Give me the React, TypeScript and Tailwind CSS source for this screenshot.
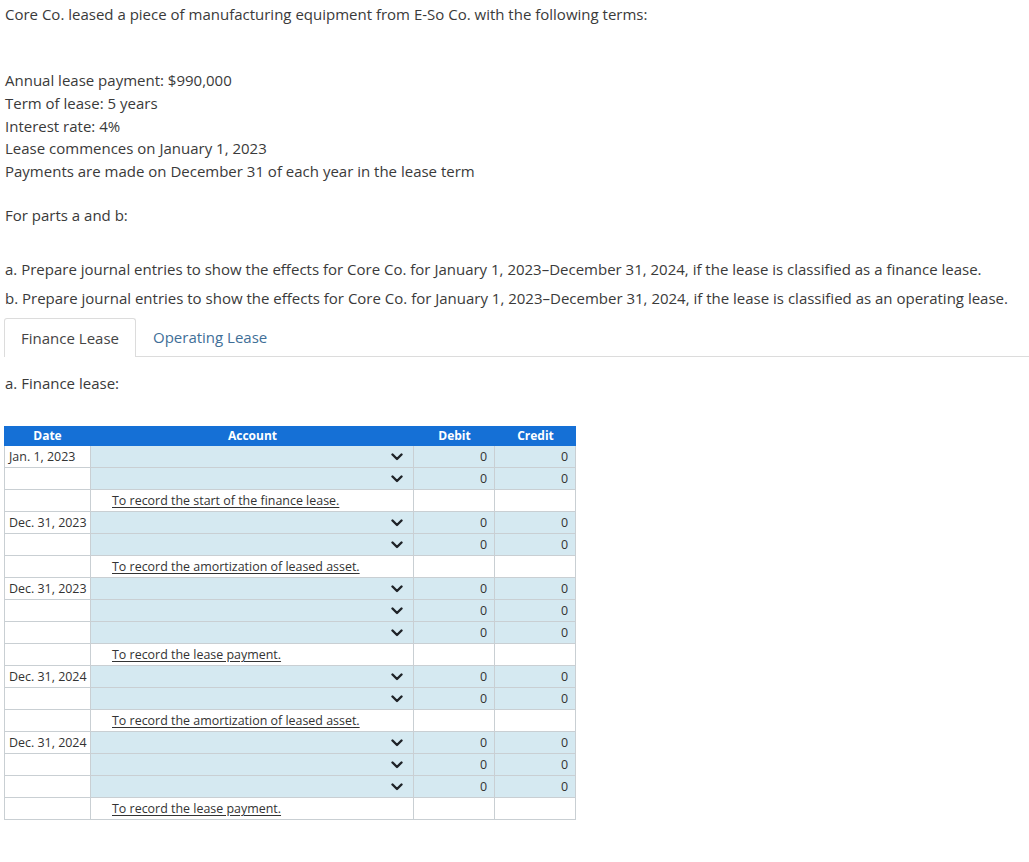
import React from "react";

type Row =
  | { kind: "entry"; date?: string }
  | { kind: "memo"; text: string };

const rows: Row[] = [
  { kind: "entry", date: "Jan. 1, 2023" },
  { kind: "entry" },
  { kind: "memo", text: "To record the start of the finance lease." },
  { kind: "entry", date: "Dec. 31, 2023" },
  { kind: "entry" },
  { kind: "memo", text: "To record the amortization of leased asset." },
  { kind: "entry", date: "Dec. 31, 2023" },
  { kind: "entry" },
  { kind: "entry" },
  { kind: "memo", text: "To record the lease payment." },
  { kind: "entry", date: "Dec. 31, 2024" },
  { kind: "entry" },
  { kind: "memo", text: "To record the amortization of leased asset." },
  { kind: "entry", date: "Dec. 31, 2024" },
  { kind: "entry" },
  { kind: "entry" },
  { kind: "memo", text: "To record the lease payment." },
];

function Chevron() {
  return (
    <svg width="12" height="8" viewBox="0 0 12 8" className="shrink-0">
      <polyline
        points="1.5,1.5 6,6 10.5,1.5"
        fill="none"
        stroke="#1f2328"
        strokeWidth="2.4"
        strokeLinecap="round"
        strokeLinejoin="round"
      />
    </svg>
  );
}

function JournalRow({ row }: { row: Row }) {
  const cell = "h-[22px] border-b border-r border-[#c9cfd3] flex items-center";
  if (row.kind === "memo") {
    return (
      <div className="flex">
        <div className={`${cell} w-[87px] border-l bg-white`} />
        <div className={`${cell} w-[323px] bg-white pl-[21px] pt-[3px]`}>
          <span className="underline underline-offset-2">{row.text}</span>
        </div>
        <div className={`${cell} w-[81px] bg-white`} />
        <div className={`${cell} w-[81px] bg-white`} />
      </div>
    );
  }
  return (
    <div className="flex">
      <div className={`${cell} w-[87px] border-l bg-white pl-[4px] pt-[3px]`}>{row.date}</div>
      <div className={`${cell} w-[323px] bg-[#d5e9f1] justify-end pr-[10px] pt-[1px]`}>
        <Chevron />
      </div>
      <div className={`${cell} w-[81px] bg-[#d5e9f1] justify-end pr-[7px] pt-[3px]`}>0</div>
      <div className={`${cell} w-[81px] bg-[#d5e9f1] justify-end pr-[7px] pt-[3px]`}>0</div>
    </div>
  );
}

export default function App() {
  return (
    <div
      className="min-h-[862px] w-[1029px] bg-white text-[15px] text-[#3a3a3a]"
      style={{ fontFamily: '"Open Sans", "Liberation Sans", sans-serif' }}
    >
      <p className="pl-[5px] pt-[4px] leading-[20px]">
        Core Co. leased a piece of manufacturing equipment from E-So Co. with the following terms:
      </p>

      <div className="mt-[45px] pl-[5px] leading-[22.75px]">
        <div>Annual lease payment: $990,000</div>
        <div>Term of lease: 5 years</div>
        <div>Interest rate: 4%</div>
        <div>Lease commences on January 1, 2023</div>
        <div>Payments are made on December 31 of each year in the lease term</div>
      </div>

      <p className="mt-[21px] pl-[5px] leading-[23px]">For parts a and b:</p>

      <div className="mt-[28px] pl-[5px] leading-[29px]">
        <div>
          a. Prepare journal entries to show the effects for Core Co. for January 1, 2023–December 31, 2024, if the lease is classified as a finance lease.
        </div>
        <div>
          b. Prepare journal entries to show the effects for Core Co. for January 1, 2023–December 31, 2024, if the lease is classified as an operating lease.
        </div>
      </div>

      <div className="mt-[5px] flex pl-[4px]">
        <div className="flex h-[39px] w-[132px] items-center justify-center rounded-t-[3px] border border-b-0 border-[#dcdcdc] bg-white text-[#444]">
          Finance Lease
        </div>
        <div className="flex h-[39px] flex-1 items-center border-b border-[#dcdcdc] pl-[17px] text-[#3f6f98]">
          Operating Lease
        </div>
      </div>

      <p className="mt-[15px] pl-[5px] leading-[23px]">a. Finance lease:</p>

      <div className="mt-[31px] ml-[4px] w-[572px] text-[12.45px] text-[#333]">
        <div className="flex h-[20px] bg-[#1570d6] text-[12px] font-bold text-white">
          <div className="flex w-[87px] items-center justify-center">Date</div>
          <div className="flex w-[323px] items-center justify-center">Account</div>
          <div className="flex w-[81px] items-center justify-center">Debit</div>
          <div className="flex w-[81px] items-center justify-center">Credit</div>
        </div>
        {rows.map((r, i) => (
          <JournalRow key={i} row={r} />
        ))}
      </div>
    </div>
  );
}
